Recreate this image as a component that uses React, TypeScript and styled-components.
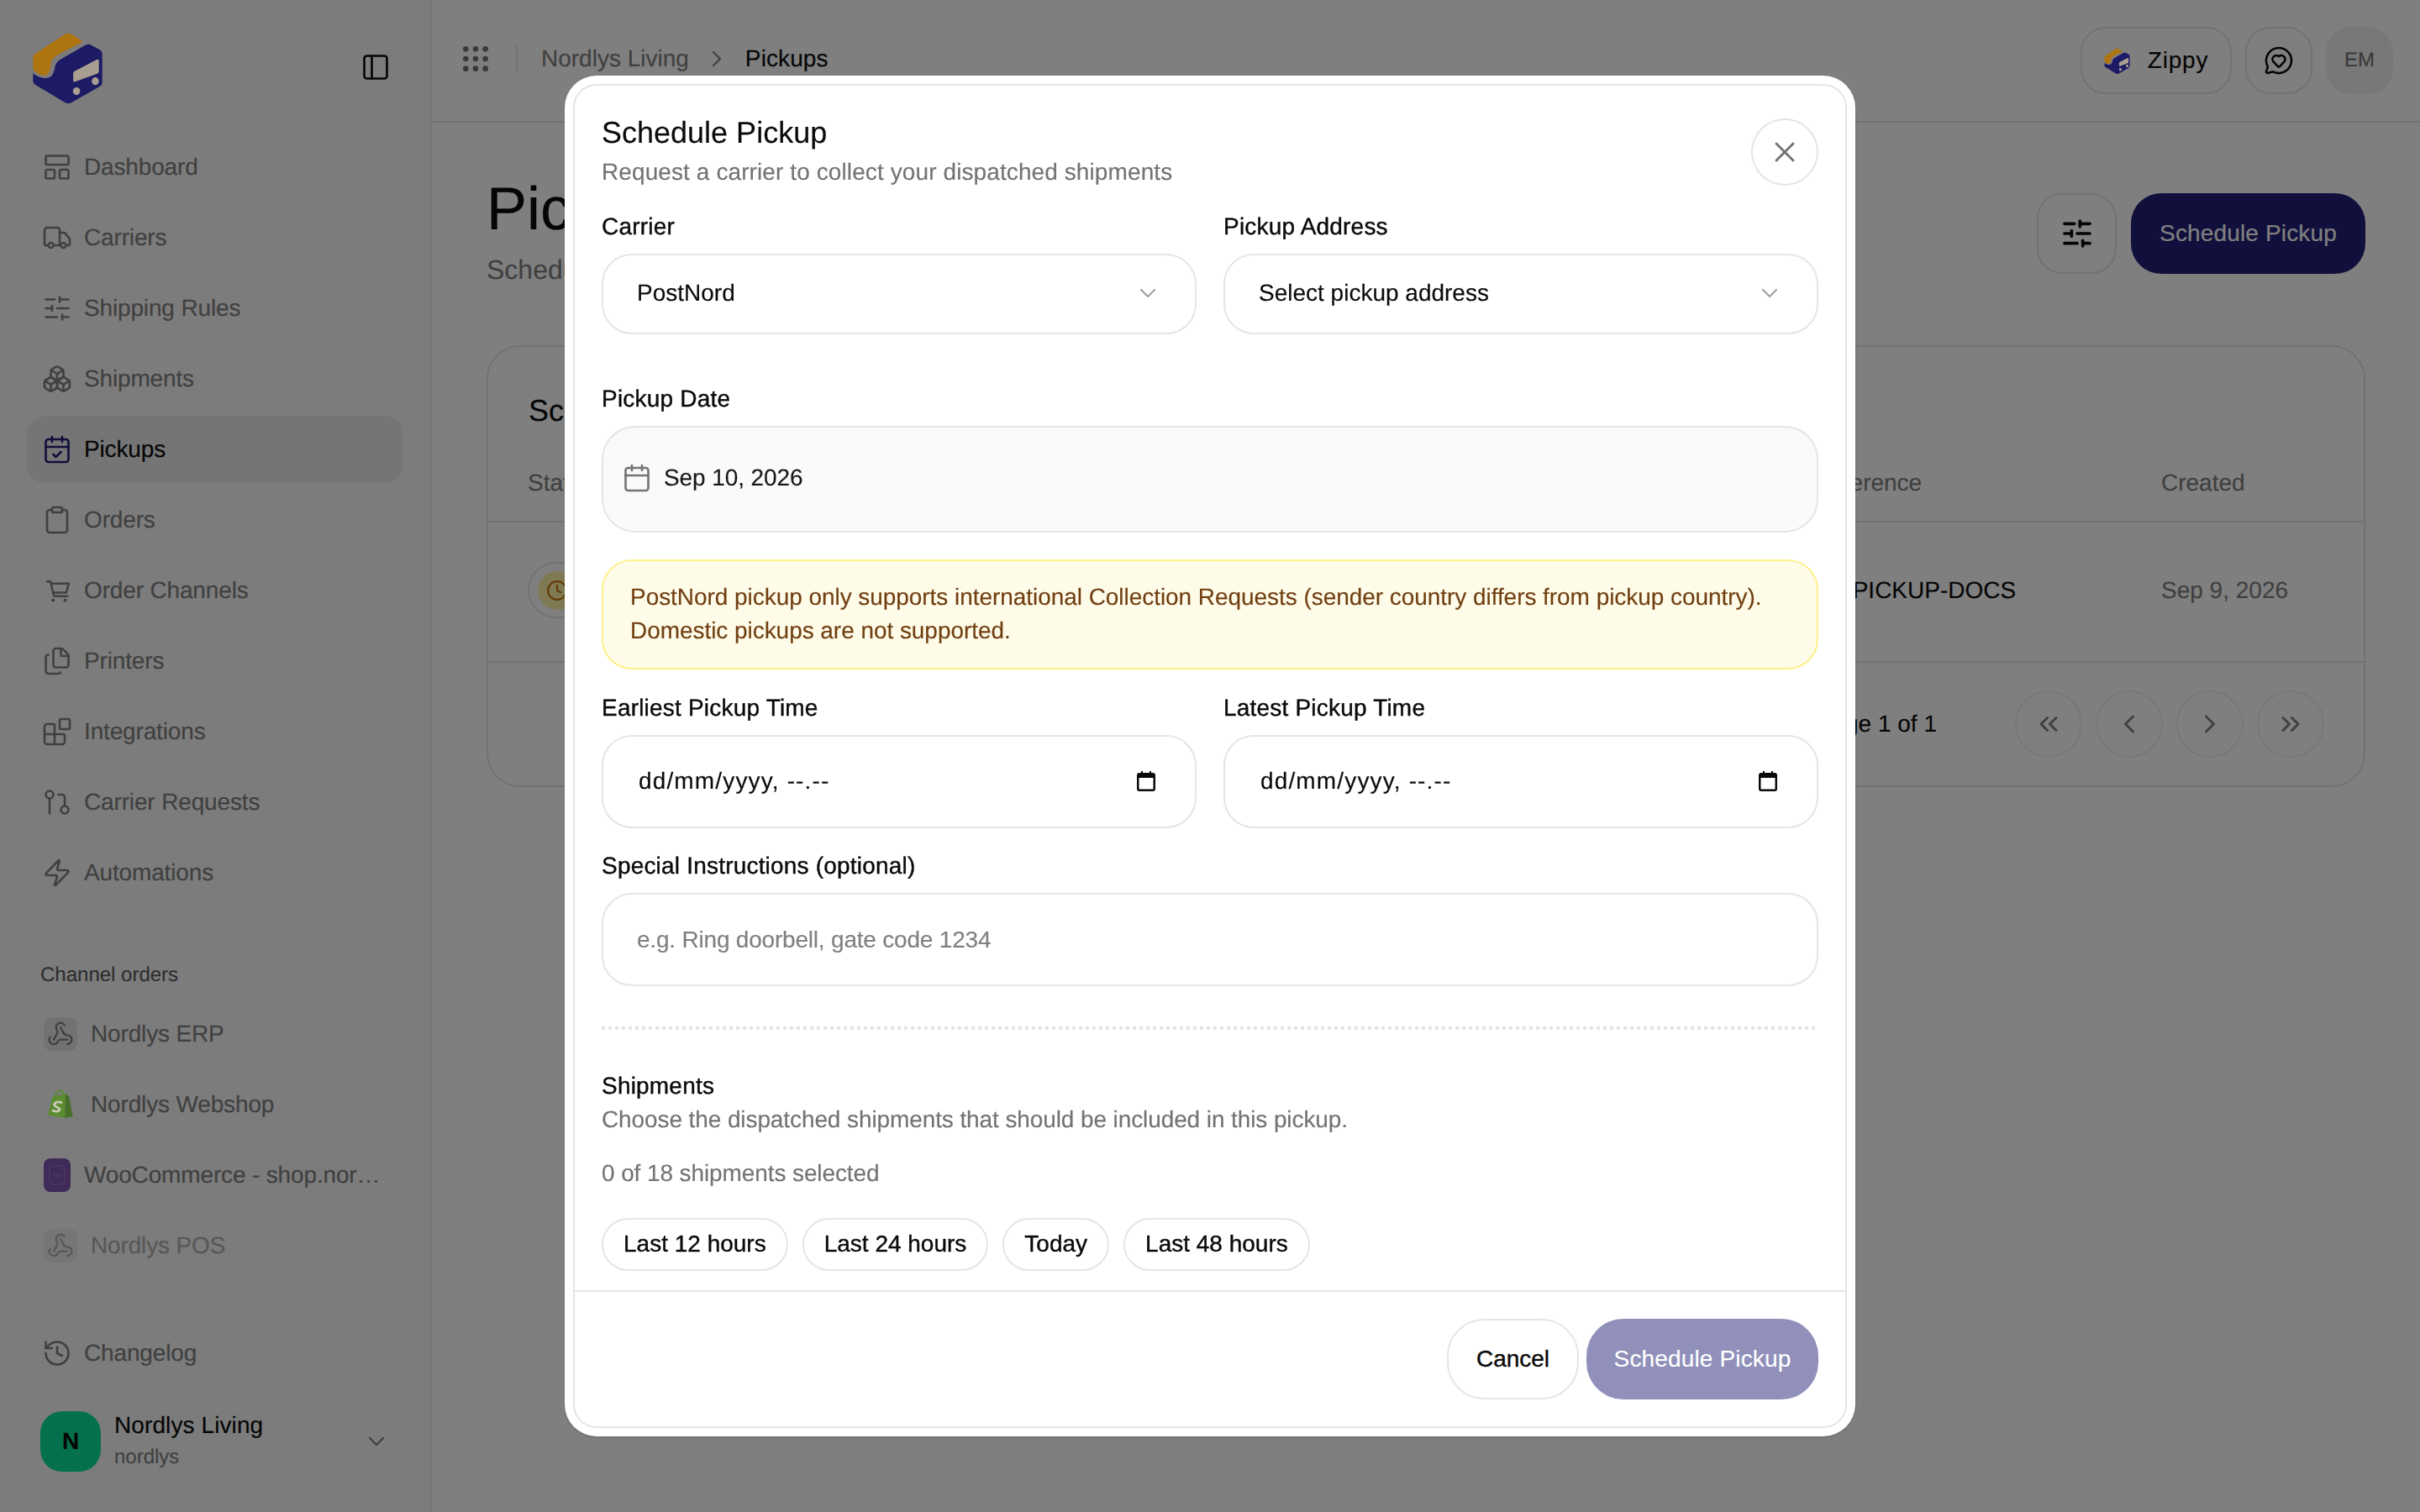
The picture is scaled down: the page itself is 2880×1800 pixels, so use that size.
import React from 'react';
import styled, { createGlobalStyle } from 'styled-components';
import {
  Blocks,
  Boxes,
  Calendar,
  CalendarCheck,
  ChevronDown,
  ChevronLeft,
  ChevronRight,
  ChevronsLeft,
  ChevronsRight,
  Clipboard,
  Clock,
  Files,
  GitPullRequest,
  Grip,
  History,
  LayoutPanelTop,
  MessageCircleHeart,
  PanelLeft,
  SlidersHorizontal,
  Truck,
  Webhook,
  X,
  Zap,
} from 'lucide-react';

const GlobalStyle = createGlobalStyle`
  html, body {
    margin: 0;
    height: 100%;
    background: #fff;
    overflow: hidden;
  }
  body {
    font-family: "Liberation Sans", Arial, sans-serif;
    font-size: 28px;
    color: #0a0a0a;
    text-rendering: geometricPrecision;
    -webkit-text-stroke: 0.15px currentColor;
  }
  * { box-sizing: border-box; }
`;

const Shell = styled.div`
  display: grid;
  grid-template-columns: 514px 1fr;
  width: 2880px;
  height: 1800px;
`;

const Sidebar = styled.aside`
  display: flex;
  flex-direction: column;
  background: #f8f8f8;
  border-right: 2px solid #ededed;
  padding: 38px 0 0 32px;
`;

const SideHead = styled.div`
  display: flex;
  align-items: center;
  justify-content: space-between;
  height: 84px;
  padding: 0 15px 0 6px;
  width: 448px;
  color: #0a0a0a;
`;

const Brand = styled.svg<{ $size: number }>`
  width: ${(p) => p.$size}px;
  height: ${(p) => p.$size}px;
  flex: none;
  position: relative;
  z-index: 60;
`;

const NavList = styled.nav<{ $top: number }>`
  display: flex;
  flex-direction: column;
  gap: 4px;
  margin-top: ${(p) => p.$top}px;
  width: 448px;
`;

const NavRow = styled.a<{ $active?: boolean; $muted?: boolean }>`
  display: flex;
  align-items: center;
  gap: 14px;
  height: 80px;
  padding-left: 18px;
  border-radius: 22px;
  font-size: 28px;
  letter-spacing: -0.15px;
  white-space: nowrap;
  color: ${(p) => (p.$active ? '#0a0a0a' : '#808080')};
  background: ${(p) => (p.$active ? '#ebebeb' : 'transparent')};
  opacity: ${(p) => (p.$muted ? 0.6 : 1)};
  svg { color: ${(p) => (p.$active ? '#221f78' : '#808080')}; flex: none; }
`;

const ChannelRow = styled(NavRow)`
  gap: 15px;
  padding-left: 20px;
`;

const GroupLabel = styled.div`
  margin: 66px 0 14px 16px;
  font-size: 24px;
  line-height: 32px;
  color: #5c5c5c;
`;

const WebhookBox = styled.span`
  display: flex;
  align-items: center;
  justify-content: center;
  width: 40px;
  height: 40px;
  flex: none;
  margin-right: 1px;
  border-radius: 9px;
  background: #e5e5e5;
`;

const ShopBox = styled.span`
  display: flex;
  width: 40px;
  height: 40px;
  flex: none;
  margin-right: 1px;
  position: relative;
  z-index: 60;
`;

const WooBox = styled.span`
  display: flex;
  align-items: center;
  justify-content: center;
  width: 32px;
  height: 40px;
  flex: none;
  margin-right: 1px;
  border-radius: 8px;
  background: #7f54b3;
`;

const EllipsisText = styled.span`
  overflow: hidden;
  text-overflow: ellipsis;
  padding-right: 26px;
`;

const Account = styled.div`
  display: flex;
  align-items: center;
  width: 448px;
  margin-top: 27px;
  padding: 0 16px 0 16px;
`;

const Avatar = styled.div`
  display: flex;
  align-items: center;
  justify-content: center;
  width: 72px;
  height: 72px;
  flex: none;
  border-radius: 26px;
  background: #0ae098;
  font-size: 28px;
  font-weight: 700;
`;

const AccountText = styled.div`
  display: flex;
  flex-direction: column;
  flex: 1;
  margin-left: 16px;
`;

const AccountName = styled.span`
  font-size: 28px;
  line-height: 38px;
  letter-spacing: 0.1px;
`;

const AccountSlug = styled.span`
  font-size: 24px;
  line-height: 38px;
  color: #808080;
`;

const Main = styled.main`
  display: flex;
  flex-direction: column;
  min-width: 0;
`;

const Topbar = styled.header`
  display: flex;
  align-items: center;
  height: 146px;
  padding: 0 32px 4px 32px;
  border-bottom: 2px solid #e5e5e5;
`;

const GripWrap = styled.span`
  display: flex;
  color: #737373;
`;

const TopSep = styled.span`
  width: 2px;
  height: 32px;
  margin: 0 28px 0 28px;
  background: #e5e5e5;
`;

const Crumb = styled.span<{ $current?: boolean }>`
  font-size: 28px;
  letter-spacing: ${(p) => (p.$current ? '0.1px' : '0')};
  color: ${(p) => (p.$current ? '#0a0a0a' : '#808080')};
`;

const CrumbSep = styled.span`
  display: flex;
  margin: 0 18px 0 17px;
  color: #808080;
`;

const TopActions = styled.div`
  display: flex;
  align-items: center;
  gap: 16px;
  margin-left: auto;
  margin-top: 4px;
`;

const GhostButton = styled.button<{ $w: number; $h?: number }>`
  display: flex;
  align-items: center;
  justify-content: center;
  gap: 21px;
  width: ${(p) => p.$w}px;
  height: ${(p) => p.$h ?? 80}px;
  padding: 0;
  border: 2px solid #e5e5e5;
  border-radius: 30px;
  background: transparent;
  font: inherit;
  letter-spacing: 0.8px;
  color: #0a0a0a;
`;

const Initials = styled.div`
  display: flex;
  align-items: center;
  justify-content: center;
  width: 80px;
  height: 80px;
  border-radius: 30px;
  background: #f0f0f0;
  font-size: 24px;
  color: #737373;
`;

const Content = styled.div`
  padding: 63px 65px 0 65px;
`;

const PageHead = styled.div`
  display: flex;
  justify-content: space-between;
`;

const PageTitle = styled.h1`
  margin: 0 0 10px;
  font-size: 72px;
  line-height: 80px;
  font-weight: 400;
`;

const PageSub = styled.p`
  margin: 0;
  font-size: 32px;
  line-height: 44px;
  color: #808080;
`;

const PageActions = styled.div`
  display: flex;
  gap: 17px;
  margin-top: 21px;
`;

const Primary = styled.button<{ $w: number; $disabled?: boolean }>`
  width: ${(p) => p.$w}px;
  height: 96px;
  padding: 0;
  border: 0;
  border-radius: ${(p) => (p.$disabled ? 44 : 36)}px;
  background: ${(p) => (p.$disabled ? '#9090ba' : '#221f78')};
  font: inherit;
  letter-spacing: 0.15px;
  color: #fff;
`;

const Card = styled.section`
  margin-top: 68px;
  height: 526px;
  border: 2px solid #e5e5e5;
  border-radius: 40px;
`;

const CardTitle = styled.h2`
  margin: 0;
  padding: 54px 48px 0;
  font-size: 36px;
  line-height: 44px;
  font-weight: 400;
`;

const TableRow = styled.div<{ $h: number; $head?: boolean }>`
  display: grid;
  grid-template-columns: 1530px 414px 1fr;
  align-items: center;
  height: ${(p) => p.$h}px;
  padding: ${(p) => (p.$head ? '18px 0 0 47px' : '0 0 4px 47px')};
  border-bottom: 2px solid #e5e5e5;
  color: ${(p) => (p.$head ? '#808080' : '#0a0a0a')};
`;

const Muted = styled.span`
  color: #808080;
`;

const StatusPill = styled.div`
  display: flex;
  align-items: center;
  gap: 12px;
  width: 200px;
  height: 67px;
  padding-left: 10px;
  border: 2px solid #e5e5e5;
  border-radius: 34px;
  font-size: 24px;
`;

const StatusDot = styled.span`
  display: flex;
  align-items: center;
  justify-content: center;
  width: 46px;
  height: 46px;
  border-radius: 50%;
  background: #fff3a8;
  color: #c77a0a;
`;

const Pager = styled.div`
  display: flex;
  align-items: center;
  justify-content: flex-end;
  height: 146px;
  padding-right: 47px;
`;

const PageCount = styled.span`
  margin-right: 93px;
`;

const PagerButtons = styled.div`
  display: flex;
  gap: 16px;
  color: #808080;
`;

const PagerButton = styled.button`
  display: flex;
  align-items: center;
  justify-content: center;
  width: 80px;
  height: 80px;
  padding: 0;
  border: 2px solid #eeeeee;
  border-radius: 50%;
  background: transparent;
  color: inherit;
`;

const Scrim = styled.div`
  position: fixed;
  inset: 0;
  z-index: 50;
  display: flex;
  align-items: center;
  justify-content: center;
  background: rgba(0, 0, 0, 0.5);
`;

const Modal = styled.div`
  width: 1536px;
  height: 1620px;
  padding: 10px;
  border-radius: 38px;
  background: #fff;
  box-shadow: 0 1px 3px rgba(0, 0, 0, 0.2);
`;

const ModalInner = styled.div`
  display: flex;
  flex-direction: column;
  height: 100%;
  border: 2px solid #e5e5e5;
  border-radius: 28px;
  overflow: hidden;
`;

const ModalBody = styled.div`
  flex: 1;
  min-height: 0;
  overflow: hidden;
  padding: 34px 32px 0;
`;

const ModalHead = styled.div`
  display: flex;
  align-items: center;
  justify-content: space-between;
`;

const ModalTitle = styled.h2`
  margin: 0 0 5px;
  font-size: 36px;
  line-height: 44px;
  font-weight: 400;
`;

const ModalSub = styled.p`
  margin: 0;
  line-height: 40px;
  letter-spacing: 0.1px;
  color: #737373;
`;

const CloseButton = styled.button`
  display: flex;
  align-items: center;
  justify-content: center;
  width: 80px;
  height: 80px;
  padding: 0;
  border: 2px solid #e5e5e5;
  border-radius: 50%;
  background: #fff;
  color: #737373;
`;

const TwoCol = styled.div<{ $top: number }>`
  display: grid;
  grid-template-columns: 708px 708px;
  gap: 32px;
  margin-top: ${(p) => p.$top}px;
`;

const Field = styled.div<{ $top?: number }>`
  display: flex;
  flex-direction: column;
  gap: 12px;
  margin-top: ${(p) => p.$top ?? 0}px;
`;

const Label = styled.label`
  line-height: 40px;
  letter-spacing: 0.2px;
  -webkit-text-stroke: 0.4px currentColor;
`;

const SelectBox = styled.div`
  display: flex;
  align-items: center;
  justify-content: space-between;
  height: 96px;
  padding: 0 40px 2px 40px;
  border: 2px solid #e5e5e5;
  border-radius: 36px;
  background: #fff;
  svg { color: #a3a3a3; }
`;

const DateBox = styled.div`
  display: flex;
  align-items: center;
  gap: 14px;
  height: 127px;
  padding: 0 0 3px 22px;
  border: 2px solid #e5e5e5;
  border-radius: 40px;
  background: #f9fafb;
  letter-spacing: -0.1px;
  color: #171717;
  svg { color: #737373; }
`;

const Warning = styled.div`
  margin-top: 32px;
  height: 131px;
  padding: 23px 32px;
  border: 2px solid #fef08a;
  border-radius: 36px;
  background: #fefce8;
  color: #713f12;
  line-height: 40px;
  letter-spacing: -0.05px;
`;

const DateTimeBox = styled.div`
  display: flex;
  align-items: center;
  justify-content: space-between;
  height: 111px;
  padding: 0 47px 2px 42px;
  border: 2px solid #e5e5e5;
  border-radius: 36px;
  letter-spacing: 1.15px;
`;

const TextInput = styled.input`
  display: block;
  width: 100%;
  height: 111px;
  padding: 0 40px;
  border: 2px solid #e5e5e5;
  border-radius: 36px;
  outline: none;
  background: #fff;
  font: inherit;
  letter-spacing: -0.2px;
  &::placeholder { color: #808080; opacity: 1; }
`;

const Dotted = styled.div`
  height: 4px;
  margin-top: 48px;
  background: repeating-linear-gradient(90deg, #e5e5e5 0 4px, transparent 4px 8px);
`;

const SectionTitle = styled.div`
  margin-top: 47px;
  line-height: 40px;
  letter-spacing: 0.2px;
  -webkit-text-stroke: 0.4px currentColor;
`;

const Hint = styled.p<{ $top?: number }>`
  margin: ${(p) => p.$top ?? 0}px 0 0;
  line-height: 40px;
  letter-spacing: -0.1px;
  color: #737373;
`;

const Chips = styled.div`
  display: flex;
  gap: 17px;
  margin-top: 33px;
`;

const Chip = styled.button`
  height: 63px;
  padding: 0 24px 2px;
  border: 2px solid #e5e5e5;
  border-radius: 32px;
  background: #fff;
  font: inherit;
  color: #0a0a0a;
  -webkit-text-stroke: 0.4px currentColor;
`;

const ModalFoot = styled.div`
  display: flex;
  justify-content: flex-end;
  gap: 9px;
  padding: 32px 32px 32px 0;
  border-top: 2px solid #e5e5e5;
`;

const CancelButton = styled.button`
  width: 157px;
  height: 96px;
  padding: 0;
  border: 2px solid #e5e5e5;
  border-radius: 44px;
  background: #fff;
  font: inherit;
  color: #0a0a0a;
  -webkit-text-stroke: 0.4px currentColor;
`;

function Logo({ size }: { size: number }) {
  return (
    <Brand $size={size} viewBox="54 48 252 258">
      <path
        d="M62 128 170 56q12-6 24 0l32 20q10 8 0 12l-76 40q-25 12-30 32-2 40-20 45-15 3-40-15-5-5-5-15v-35q0-8 7-12z"
        fill="#ad7410"
      />
      <path
        d="M55 198q25 17 45 17 25 0 32-30 3-25 18-35l95-55q11-5 23 2l27 15q10 6 10 16v102q0 10-10 15l-100 58q-13 7-25 0L65 240q-10-5-10-15z"
        fill="#1d1a66"
      />
      <path
        d="M205 190l80-42q8-3 8 4v38q0 6-6 9l-80 29q-7 2-7-4v-26q0-6 5-8z"
        fill="#a89f90"
      />
      <ellipse cx="212" cy="262" rx="13" ry="14" fill="#a89f90" />
      <ellipse cx="280" cy="226" rx="13" ry="14" fill="#a89f90" />
    </Brand>
  );
}

function PickerGlyph() {
  return (
    <svg width="22" height="24" viewBox="0 0 22 24">
      <path
        fillRule="evenodd"
        fill="#0a0a0a"
        d="M5 0h2v2h8V0h2v2h2a3 3 0 0 1 3 3v16a3 3 0 0 1-3 3H3a3 3 0 0 1-3-3V5a3 3 0 0 1 3-3h2zM2.5 8v13a.5.5 0 0 0 .5.5h16a.5.5 0 0 0 .5-.5V8z"
      />
    </svg>
  );
}

function CartIcon({ size }: { size: number; strokeWidth?: number }) {
  return (
    <svg
      width={size}
      height={size}
      viewBox="10.5 13.5 108 108"
      fill="none"
      stroke="currentColor"
      strokeWidth="7.5"
      strokeLinecap="round"
      strokeLinejoin="round"
    >
      <path d="M28 35h13l11 49a5 5 0 0 0 5 4h44" />
      <path d="M44 43h62l-9 32H50" />
      <circle cx="50" cy="102" r="6" fill="currentColor" stroke="none" />
      <circle cx="93" cy="102" r="6" fill="currentColor" stroke="none" />
    </svg>
  );
}

function ShopifyBag() {
  return (
    <svg width="40" height="40" viewBox="25 20 100 120" preserveAspectRatio="none">
      <path d="M58 52q4-22 18-22 8 2 8 15" fill="none" stroke="#5b8c30" strokeWidth="5" />
      <path d="M38 118 50 56q2-4 8-6l32-8-2 86z" fill="#5b8c30" />
      <path d="M90 42l10 8 12 72-24 6z" fill="#46702a" />
      <path d="M80 74q-14-8-22 2-4 8 8 14 10 5 4 12-8 6-20-2" fill="none" stroke="#c8ccb8" strokeWidth="8" />
    </svg>
  );
}

const navItems = [
  { label: 'Dashboard', icon: LayoutPanelTop },
  { label: 'Carriers', icon: Truck },
  { label: 'Shipping Rules', icon: SlidersHorizontal },
  { label: 'Shipments', icon: Boxes },
  { label: 'Pickups', icon: CalendarCheck, active: true },
  { label: 'Orders', icon: Clipboard },
  { label: 'Order Channels', icon: CartIcon },
  { label: 'Printers', icon: Files },
  { label: 'Integrations', icon: Blocks },
  { label: 'Carrier Requests', icon: GitPullRequest },
  { label: 'Automations', icon: Zap },
];

const quickRanges = ['Last 12 hours', 'Last 24 hours', 'Today', 'Last 48 hours'];

export default function App() {
  return (
    <>
      <GlobalStyle />
      <Shell>
        <Sidebar>
          <SideHead>
            <Logo size={85} />
            <PanelLeft size={36} strokeWidth={1.75} />
          </SideHead>
          <NavList $top={37}>
            {navItems.map(({ label, icon: Icon, active }) => (
              <NavRow key={label} $active={active}>
                <Icon size={36} strokeWidth={1.75} />
                {label}
              </NavRow>
            ))}
          </NavList>
          <GroupLabel>Channel orders</GroupLabel>
          <NavList $top={0}>
            <ChannelRow>
              <WebhookBox>
                <Webhook size={32} strokeWidth={1.75} />
              </WebhookBox>
              Nordlys ERP
            </ChannelRow>
            <ChannelRow>
              <ShopBox>
                <ShopifyBag />
              </ShopBox>
              Nordlys Webshop
            </ChannelRow>
            <ChannelRow>
              <WooBox>
                <svg width="22" height="26" viewBox="0 0 22 26" fill="none" stroke="#8f6cba" strokeWidth="2">
                  <rect x="2" y="2" width="18" height="22" rx="5" />
                  <path d="M7 11c1 4 7 4 8 0" />
                </svg>
              </WooBox>
              <EllipsisText>WooCommerce - shop.nordlysliving.dk</EllipsisText>
            </ChannelRow>
            <ChannelRow $muted>
              <WebhookBox>
                <Webhook size={32} strokeWidth={1.75} />
              </WebhookBox>
              Nordlys POS
            </ChannelRow>
          </NavList>
          <NavList $top={48}>
            <NavRow>
              <History size={36} strokeWidth={1.75} />
              Changelog
            </NavRow>
          </NavList>
          <Account>
            <Avatar>N</Avatar>
            <AccountText>
              <AccountName>Nordlys Living</AccountName>
              <AccountSlug>nordlys</AccountSlug>
            </AccountText>
            <ChevronDown size={32} color="#808080" strokeWidth={1.75} />
          </Account>
        </Sidebar>

        <Main>
          <Topbar>
            <GripWrap>
              <Grip size={40} strokeWidth={2} />
            </GripWrap>
            <TopSep />
            <Crumb>Nordlys Living</Crumb>
            <CrumbSep>
              <ChevronRight size={32} strokeWidth={1.75} />
            </CrumbSep>
            <Crumb $current>Pickups</Crumb>
            <TopActions>
              <GhostButton $w={180}>
                <Logo size={31} />
                Zippy
              </GhostButton>
              <GhostButton $w={80}>
                <MessageCircleHeart size={36} strokeWidth={1.75} />
              </GhostButton>
              <Initials>EM</Initials>
            </TopActions>
          </Topbar>
          <Content>
            <PageHead>
              <div>
                <PageTitle>Pickups</PageTitle>
                <PageSub>Schedule and track carrier pickups</PageSub>
              </div>
              <PageActions>
                <GhostButton $w={95} $h={96}>
                  <SlidersHorizontal size={40} strokeWidth={2.2} />
                </GhostButton>
                <Primary $w={279}>Schedule Pickup</Primary>
              </PageActions>
            </PageHead>
            <Card>
              <CardTitle>Scheduled Pickups</CardTitle>
              <TableRow $h={111} $head>
                <span>Status</span>
                <span>Reference</span>
                <span>Created</span>
              </TableRow>
              <TableRow $h={167}>
                <StatusPill>
                  <StatusDot>
                    <Clock size={26} strokeWidth={2} />
                  </StatusDot>
                  Scheduled
                </StatusPill>
                <span>PK-PICKUP-DOCS</span>
                <Muted>Sep 9, 2026</Muted>
              </TableRow>
              <Pager>
                <PageCount>Page 1 of 1</PageCount>
                <PagerButtons>
                  <PagerButton>
                    <ChevronsLeft size={36} strokeWidth={2} />
                  </PagerButton>
                  <PagerButton>
                    <ChevronLeft size={36} strokeWidth={2} />
                  </PagerButton>
                  <PagerButton>
                    <ChevronRight size={36} strokeWidth={2} />
                  </PagerButton>
                  <PagerButton>
                    <ChevronsRight size={36} strokeWidth={2} />
                  </PagerButton>
                </PagerButtons>
              </Pager>
            </Card>
          </Content>
        </Main>
      </Shell>

      <Scrim>
        <Modal>
          <ModalInner>
            <ModalBody>
              <ModalHead>
                <div>
                  <ModalTitle>Schedule Pickup</ModalTitle>
                  <ModalSub>Request a carrier to collect your dispatched shipments</ModalSub>
                </div>
                <CloseButton>
                  <X size={40} strokeWidth={1.75} />
                </CloseButton>
              </ModalHead>

              <TwoCol $top={25}>
                <Field>
                  <Label>Carrier</Label>
                  <SelectBox>
                    PostNord
                    <ChevronDown size={32} strokeWidth={1.75} />
                  </SelectBox>
                </Field>
                <Field>
                  <Label>Pickup Address</Label>
                  <SelectBox>
                    Select pickup address
                    <ChevronDown size={32} strokeWidth={1.75} />
                  </SelectBox>
                </Field>
              </TwoCol>

              <Field $top={57}>
                <Label>Pickup Date</Label>
                <DateBox>
                  <Calendar size={36} strokeWidth={1.75} />
                  Sep 10, 2026
                </DateBox>
              </Field>

              <Warning>
                PostNord pickup only supports international Collection Requests (sender country differs from pickup
                country). Domestic pickups are not supported.
              </Warning>

              <TwoCol $top={26}>
                <Field>
                  <Label>Earliest Pickup Time</Label>
                  <DateTimeBox>
                    dd/mm/yyyy, --.--
                    <PickerGlyph />
                  </DateTimeBox>
                </Field>
                <Field>
                  <Label>Latest Pickup Time</Label>
                  <DateTimeBox>
                    dd/mm/yyyy, --.--
                    <PickerGlyph />
                  </DateTimeBox>
                </Field>
              </TwoCol>

              <Field $top={25}>
                <Label>Special Instructions (optional)</Label>
                <TextInput placeholder="e.g. Ring doorbell, gate code 1234" />
              </Field>

              <Dotted />

              <SectionTitle>Shipments</SectionTitle>
              <Hint>Choose the dispatched shipments that should be included in this pickup.</Hint>
              <Hint $top={24}>0 of 18 shipments selected</Hint>
              <Chips>
                {quickRanges.map((range) => (
                  <Chip key={range}>{range}</Chip>
                ))}
              </Chips>
            </ModalBody>
            <ModalFoot>
              <CancelButton>Cancel</CancelButton>
              <Primary $w={276} $disabled>
                Schedule Pickup
              </Primary>
            </ModalFoot>
          </ModalInner>
        </Modal>
      </Scrim>
    </>
  );
}
